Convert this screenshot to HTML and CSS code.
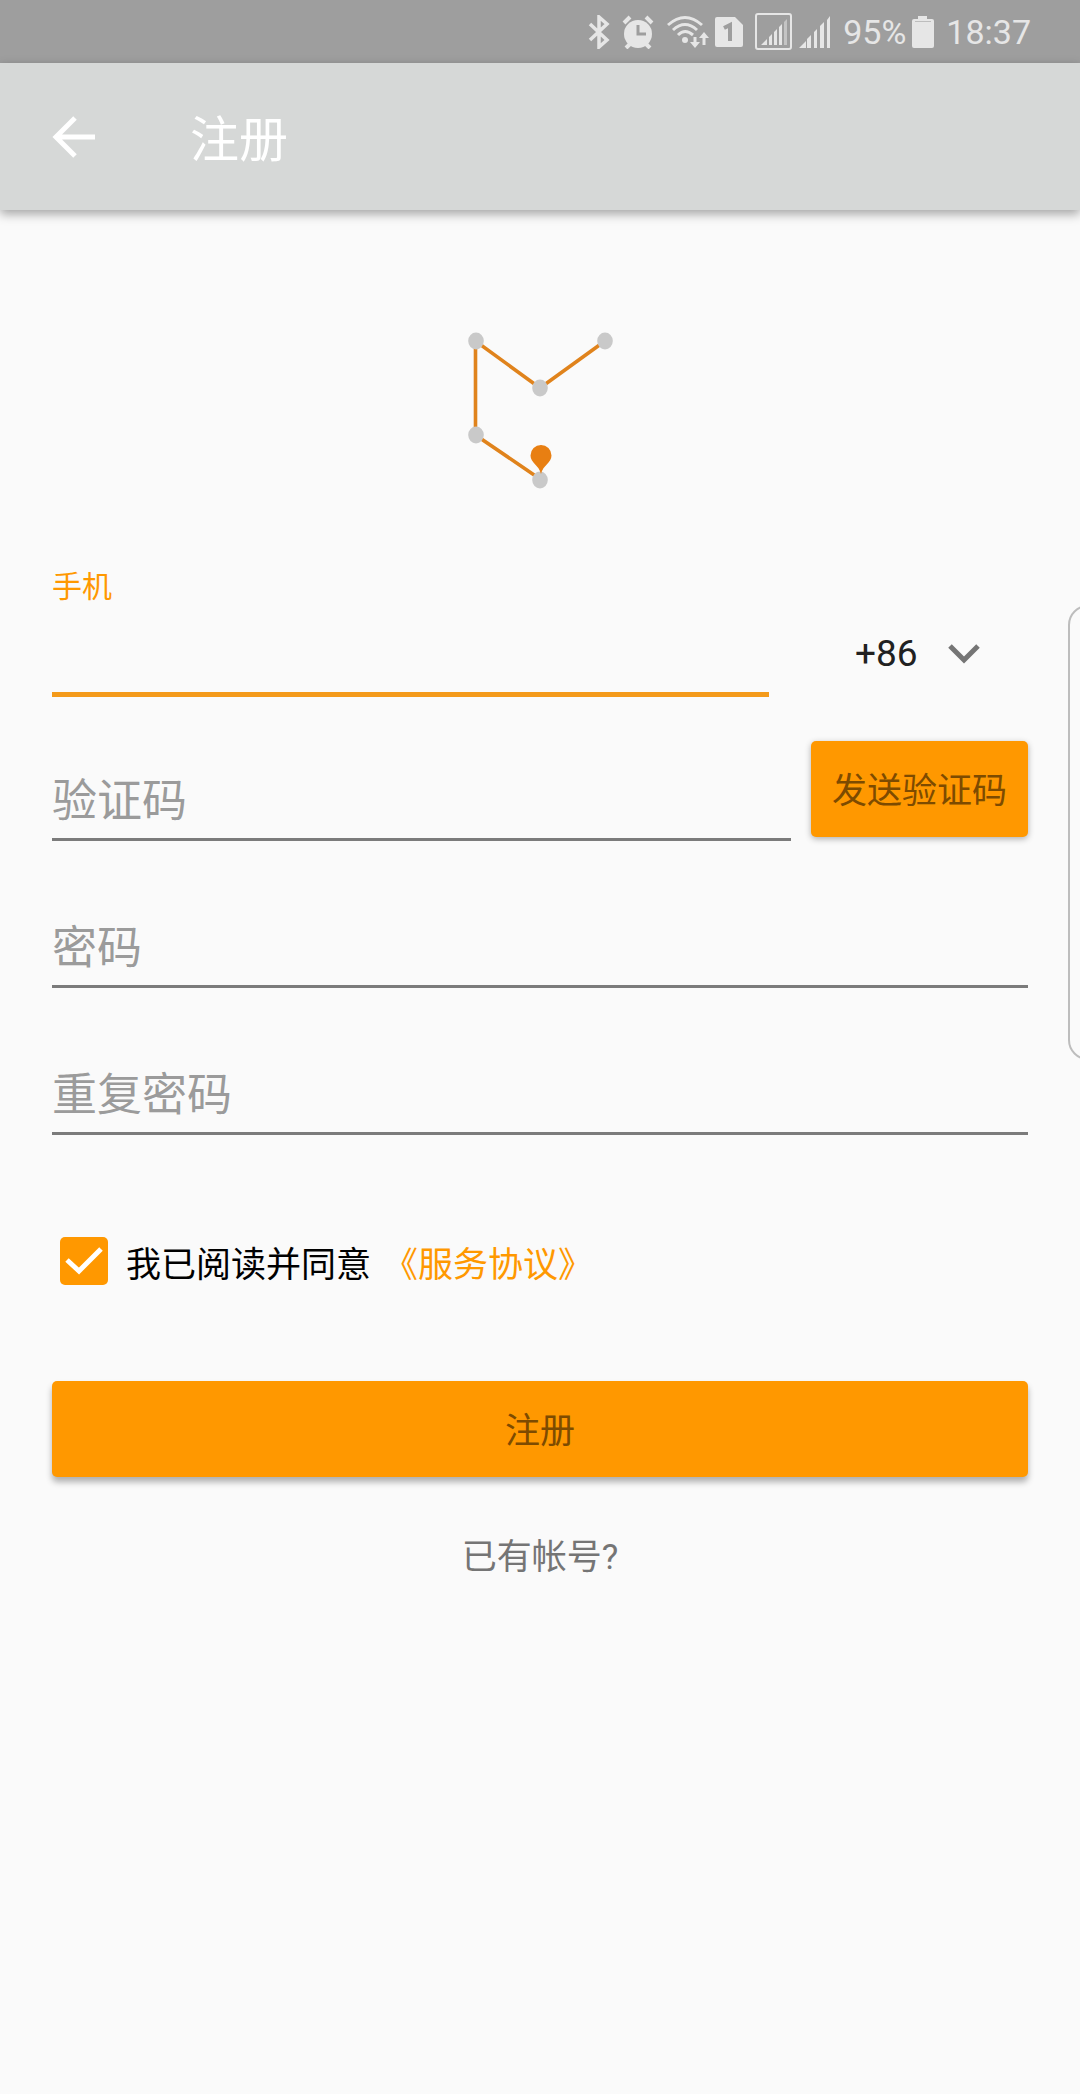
FILE: index.html
```html
<!DOCTYPE html>
<html lang="zh-CN">
<head>
<meta charset="utf-8">
<meta name="viewport" content="width=device-width, initial-scale=1">
<title>注册</title>
<link rel="stylesheet" href="styles.css">
</head>
<body>
<div class="screen">
  <div class="status-bar">
    <svg width="22" height="34" viewBox="0 0 22 34" fill="none" stroke="currentColor" stroke-width="3.500" aria-hidden="true"><path d="M2 9 19 25 11 32V2l8 7L2 25"/></svg>
    <svg width="32" height="34" viewBox="0 0 32 34" aria-hidden="true"><circle cx="16" cy="19" r="14" fill="currentColor"/><path d="M2 8 8 2M30 8 24 2M8 29l-4 4M24 29l4 4" stroke="currentColor" stroke-width="4"/><path d="M16 10v9h8" fill="none" stroke="#9e9e9e" stroke-width="3"/></svg>
    <div class="status-group">
      <svg width="44" height="34" viewBox="0 0 44 34" fill="none" stroke="currentColor" stroke-width="3" aria-hidden="true"><path d="M2 10Q19-5 36 10M7 15Q19 4 31 15M12 20Q19 13 27 20"/><circle cx="19" cy="25" r="3" fill="currentColor" stroke="none"/><path d="M29 22v7M38 30v-9"/><path d="M24 27h10l-5 6zM33 23h10l-5-6z" fill="currentColor" stroke="none"/></svg>
      <svg width="28" height="34" viewBox="0 0 28 34" aria-hidden="true"><path d="M2 2h18l8 8v20q0 2-2 2H2q-2 0-2-2V4q0-2 2-2z" fill="currentColor"/><path d="M9 13l6-3v16" fill="none" stroke="#9e9e9e" stroke-width="4"/></svg>
    </div>
    <div class="status-group">
      <svg width="38" height="38" viewBox="0 0 38 38" aria-hidden="true"><rect x="1" y="1" width="35" height="35" rx="2" fill="none" stroke="currentColor" stroke-width="2"/><path d="M6 32l6-6v6zM14 24l3-3v11h-3zM19 19l3-3v16h-3zM24 14l3-3v21h-3z" fill="currentColor"/><path d="M29 9l3-3v26h-3z" fill="#c4c4c4"/></svg>
      <svg width="33" height="34" viewBox="0 0 33 34" fill="currentColor" aria-hidden="true"><path d="M1 33l7-7v7zM9 24l4-4v13H9zM16 17l3-3v19h-3zM22 11l4-4v26h-4zM29 5l3-4v32h-3z"/></svg>
    </div>
    <div class="status-group battery">
      <span>95%</span>
      <svg width="22" height="34" viewBox="0 0 22 34" aria-hidden="true"><path d="M6 1h9v3h5q2 0 2 2v25q0 2-2 2H2q-2 0-2-2V6q0-2 2-2h4z" fill="currentColor"/><path d="M3 6.500h16" stroke="#bdbdbd"/></svg>
    </div>
    <span>18:37</span>
  </div>

  <header class="app-bar">
    <button class="back" type="button" aria-label="返回">
      <svg width="44" height="44" viewBox="0 0 44 44" fill="none" stroke="currentColor" stroke-width="5" aria-hidden="true"><path d="M43 22H5M23 3 4 22l19 19"/></svg>
    </button>
    <h1 class="title">注册</h1>
  </header>

  <main class="content">
    <svg class="logo" width="160" height="160" viewBox="0 0 160 160" aria-hidden="true">
      <path d="M145 11 80 58 15.500 11v94L80 149" fill="none" stroke="#e0831c" stroke-width="3.600"/>
      <g fill="#c9c9c9"><ellipse cx="16" cy="11" rx="7.800" ry="8.400"/><ellipse cx="80" cy="58" rx="7.800" ry="8.400"/><ellipse cx="145" cy="11" rx="7.800" ry="8.400"/><ellipse cx="16" cy="105" rx="7.800" ry="8.400"/><ellipse cx="80" cy="150" rx="7.800" ry="8.400"/></g>
      <path d="M81 144C79 135 70.500 133 70.500 125.500a10.500 10.500 0 0 1 21 0C91.500 133 83 135 81 144z" fill="#e87f12"/>
    </svg>

    <form class="form">
      <div class="phone-row">
        <div class="phone">
          <label class="label" for="phone">手机</label>
          <input class="input active" id="phone" type="tel">
        </div>
        <div class="country">
          <select class="code" aria-label="国家代码"><option>+86</option></select>
          <svg class="chevron" width="32" height="20" viewBox="0 0 32 20" fill="none" stroke="#757575" stroke-width="5" aria-hidden="true"><path d="M2 2l14 14L30 2"/></svg>
        </div>
      </div>
      <div class="verify-row">
        <input class="input verify" type="text" placeholder="验证码" aria-label="验证码">
        <button class="button send" type="button">发送验证码</button>
      </div>
      <input class="input secret" type="password" placeholder="密码" aria-label="密码">
      <input class="input secret" type="password" placeholder="重复密码" aria-label="重复密码">
      <div class="terms">
        <input class="check" id="agree" type="checkbox" checked>
        <label for="agree">我已阅读并同意</label>
        <a class="terms-link" href="#">《服务协议》</a>
      </div>
      <button class="button submit" type="submit">注册</button>
    </form>
    <a class="login" href="#">已有帐号?</a>
  </main>
  <div class="edge-handle"></div>
</div>
</body>
</html>
```

FILE: styles.css
```css
* { box-sizing: border-box; }

body {
  margin: 0;
  background: #fafafa;
  color: #000;
  font-family: Roboto, "Noto Sans CJK SC", sans-serif;
  font-size: 35px;
}

button, input, select { font: inherit; }
a { text-decoration: none; }
svg { display: block; flex: none; }

.screen {
  position: relative;
  min-height: 100vh;
  overflow: hidden;
}

.status-bar {
  display: flex;
  align-items: center;
  justify-content: flex-end;
  gap: 12px;
  height: 63px;
  padding-right: 49px;
  background: #9e9e9e;
  color: #e6e6e6;
  font-size: 34px;
}

.status-group {
  display: flex;
  align-items: center;
  gap: 5px;
}

.battery { gap: 6px; }

.app-bar {
  display: flex;
  align-items: center;
  gap: 94px;
  height: 147px;
  padding: 0 52px;
  background: #d6d8d7;
  color: #fff;
  box-shadow: 0 4px 10px rgba(0, 0, 0, .35);
}

.back {
  padding: 0;
  border: 0;
  background: none;
  color: inherit;
}

.title {
  margin: 0;
  padding-bottom: 2px;
  font-size: 49px;
  font-weight: 400;
}

.content {
  display: flex;
  flex-direction: column;
  padding: 120px 52px 0;
}

.logo { align-self: center; }

.form {
  display: flex;
  flex-direction: column;
  gap: 44px;
  margin-top: 76px;
}

.phone-row {
  display: flex;
}

.phone { flex: 1; }

.label {
  display: block;
  color: #ff9800;
  font-size: 30px;
  line-height: 42px;
}

.input {
  display: block;
  width: 100%;
  min-width: 0;
  padding: 0;
  border: 0;
  border-bottom: 3px solid #7b7b7b;
  border-radius: 0;
  outline: 0;
  background: none;
  font-size: 45px;
}

.input::placeholder {
  color: #9b9b9b;
  opacity: 1;
}

.active {
  height: 89px;
  border-bottom: 5px solid #f49a1a;
}

.country {
  display: grid;
  align-items: center;
  width: 259px;
  padding: 44px 48px 0 86px;
}

.code, .chevron { grid-area: 1 / 1; }

.code {
  width: 100%;
  padding: 0;
  border: 0;
  appearance: none;
  background: none;
  color: #212121;
  font-size: 37px;
}

.chevron {
  justify-self: end;
  pointer-events: none;
}

.verify-row {
  display: flex;
  gap: 20px;
}

.verify {
  flex: 1;
  height: 100px;
  padding-top: 23px;
}

.secret {
  height: 103px;
  padding-top: 26px;
}

.button {
  height: 96px;
  padding: 0 21px 3px;
  border: 0;
  border-radius: 5px;
  background: #ff9800;
  color: #7d4b00;
  box-shadow: 0 2px 6px rgba(0, 0, 0, .3);
}

.terms {
  display: flex;
  align-items: center;
  gap: 12px;
  height: 48px;
  margin: 58px 0 52px;
  padding-left: 8px;
}

.check {
  width: 48px;
  height: 48px;
  margin: 0 6px 0 0;
  border-radius: 5px;
  appearance: none;
  background: #ff9800;
}

.check:checked {
  background: #ff9800 url("data:image/svg+xml,%3Csvg xmlns='http://www.w3.org/2000/svg' viewBox='0 0 48 48'%3E%3Cpath d='M7 23l12 11 22-22' fill='none' stroke='%23fff' stroke-width='5'/%3E%3C/svg%3E") center / 100% 100%;
}

.terms-link { color: #ff9800; }

.submit {
  box-shadow: 0 5px 6px rgba(0, 0, 0, .3);
}

.login {
  align-self: center;
  margin-top: 58px;
  color: #757575;
  line-height: 46px;
}

/* Handle of the slide-in panel, mostly past the right edge */
.edge-handle {
  position: absolute;
  top: 605px;
  right: -28px;
  width: 40px;
  height: 455px;
  border: 2px solid #bdbdbd;
  border-radius: 20px;
}
```
